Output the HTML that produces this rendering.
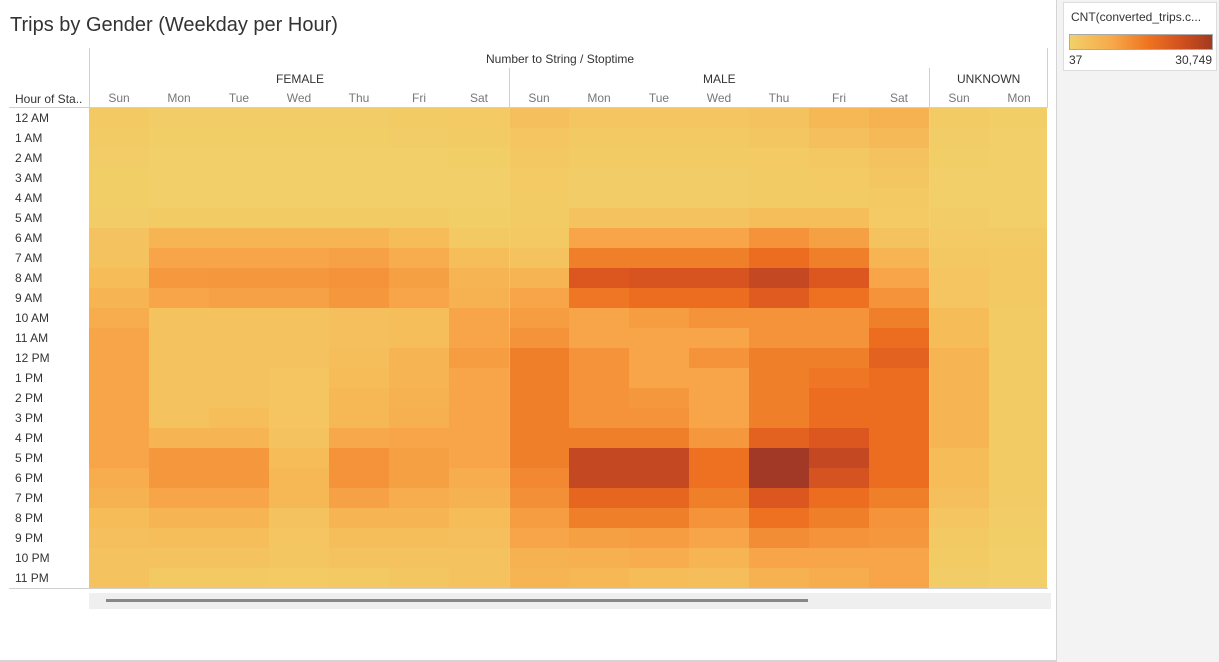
<!DOCTYPE html>
<html><head><meta charset="utf-8">
<style>
body{margin:0;width:1219px;height:662px;background:#f3f3f3;font-family:"Liberation Sans",sans-serif;position:relative;overflow:hidden}
#main{position:absolute;left:0;top:0;width:1056px;height:660px;background:#fff;border-right:1px solid #d4d4d4;border-bottom:2px solid #d4d4d4}
.t{position:absolute;white-space:nowrap}
#title{left:10px;top:14px;font-size:20px;color:#333}
.hdr{font-size:12px;color:#333}
.day{font-size:12px;color:#777;width:60px;text-align:center;top:91px}
.row{font-size:12px;color:#333;left:15px}
.cell{position:absolute;width:60px;height:20px}
.line{position:absolute;background:#d0d0d0}
</style></head><body>
<div id="main">
<div class="t" id="title">Trips by Gender (Weekday per Hour)</div>
<div class="t hdr" style="left:486px;top:52px">Number to String / Stoptime</div>
<div class="t hdr" style="left:276px;top:72px">FEMALE</div>
<div class="t hdr" style="left:703px;top:72px">MALE</div>
<div class="t hdr" style="left:957px;top:72px">UNKNOWN</div>
<div class="t hdr" style="left:15px;top:92px">Hour of Sta..</div>
<div class="line" style="left:89px;top:48px;width:1px;height:60px"></div>
<div class="line" style="left:509px;top:68px;width:1px;height:40px"></div>
<div class="line" style="left:929px;top:68px;width:1px;height:40px"></div>
<div class="line" style="left:1047px;top:48px;width:1px;height:60px"></div>
<div id="grid"></div>
<div class="line" style="left:9px;top:107px;width:1039px;height:1px"></div>
<div class="line" style="left:9px;top:588px;width:1039px;height:1px"></div>
<div class="line" style="left:509px;top:108px;width:1px;height:480px;background:#e8d0a0;opacity:.6"></div>
<div class="line" style="left:929px;top:108px;width:1px;height:480px;background:#e8d0a0;opacity:.6"></div>
<div style="position:absolute;left:89px;top:593px;width:962px;height:16px;background:#efefef"></div>
<div style="position:absolute;left:106px;top:599px;width:702px;height:3px;background:#888"></div>
</div>
<div style="position:absolute;left:1063px;top:2px;width:152px;height:67px;background:#fff;border:1px solid #ddd">
<div class="t" style="left:7px;top:7px;font-size:12px;color:#333">CNT(converted_trips.c...</div>
<div style="position:absolute;left:5px;top:31px;width:142px;height:14px;border:1px solid #aaa;background:linear-gradient(to right,#f2d06a,#f6a84a 30%,#ee7420 55%,#d2501f 78%,#a3391f)"></div>
<div class="t" style="left:5px;top:50px;font-size:12px;color:#333">37</div>
<div class="t" style="right:4px;top:50px;font-size:12px;color:#333">30,749</div>
</div>
<script>
var days=["Sun","Mon","Tue","Wed","Thu","Fri","Sat","Sun","Mon","Tue","Wed","Thu","Fri","Sat","Sun","Mon"];
var hours=["12 AM","1 AM","2 AM","3 AM","4 AM","5 AM","6 AM","7 AM","8 AM","9 AM","10 AM","11 AM","12 PM","1 PM","2 PM","3 PM","4 PM","5 PM","6 PM","7 PM","8 PM","9 PM","10 PM","11 PM"];
var cols=[
[.5,.3,.2,.1,.1,.2,1,1,1.5,2,2.5,3,3,3,3,3,3,3,2.5,2.2,1.5,1.2,1,1],
[.2,.1,0,0,0,.3,2,3,3.7,3,1,1,1,1,1,1,2,3.8,3.8,3,2,1.3,1,.5],
[.2,.1,0,0,0,.3,2,3,3.8,3.2,1,1,1,1,1,1.3,2,3.8,3.8,3,2,1.3,1,.5],
[.2,.1,0,0,0,.3,2,3,3.8,3.2,1,1,1,.8,.8,.8,1,1.5,1.8,1.8,1,.8,.7,.4],
[.2,.1,0,0,0,.3,2,3.2,4,3.8,1.2,1.2,1.3,1.5,1.8,1.8,2.8,4,4,3.2,2,1.3,1,.5],
[.3,.2,0,0,0,.3,1.5,2.5,3.3,3,1.3,1.3,2,2,2.2,2.3,3,3.3,3.3,2.5,2,1.3,1,.7],
[.4,.3,.1,0,0,.1,.5,1.3,2,2.2,3,3,3.5,3,3,3,3,3,2.5,2.2,1.5,1.2,1,1],
[1.2,.8,.6,.4,.3,.3,.5,1,2,3,3.5,4,5,5,5,5,5,5,4.5,4.2,3.5,3,2.2,2],
[.8,.5,.3,.2,.2,1,3,5,7,5.5,3,3,4,4,4,4,5,8,8,6.3,5,3.3,2.3,1.8],
[.8,.5,.3,.2,.2,1,3,5,7.2,6,3.5,3,3,3,3.8,4,5,8,8,6.3,5,3.5,2.5,1.5],
[.8,.5,.3,.2,.2,1,3,5,7.2,6,4,3,4,3,3,3,3.8,5.8,5.8,5,4,3,2,1.3],
[1,.7,.4,.3,.3,1.3,4,6,8,6.8,4,4,5,5,5,5,6.5,9,9,7,5.8,4.3,3,2.2],
[1.8,1.2,.6,.4,.3,1.3,3.3,5,7,5.8,4,4,5,5.5,6,6,7,8,7.3,6,5,4,3,2.5],
[2.2,1.6,1,.7,.5,.4,1,2,3,4,5,6,6.5,6,6,6,6,6,6,5,4,3.8,3,3],
[.3,.2,.1,0,0,.2,.4,.6,.8,.8,1.5,1.5,2,2,2,2,2,1.5,1.5,1.2,.8,.5,.3,.2],
[.1,0,0,0,0,0,.3,.5,.5,.5,.3,.3,.3,.3,.3,.3,.3,.3,.3,.3,.2,.1,0,0]];
var pal=[[242,207,104],[244,194,94],[246,181,82],[247,165,72],[244,147,58],[240,127,42],[236,109,31],[220,87,32],[196,72,33],[161,57,38]];
function col(v){var i=Math.min(8,Math.floor(v)),f=v-i,a=pal[i],b=pal[i+1];return "rgb("+[0,1,2].map(function(k){return Math.round(a[k]+(b[k]-a[k])*f)}).join(",")+")";}
var h="";
for(var c=0;c<16;c++){var w=c==15?58:60;
h+='<div class="t day" style="left:'+(89+c*60)+'px">'+days[c]+'</div>';
for(var r=0;r<24;r++)h+='<div class="cell" style="left:'+(89+c*60)+'px;top:'+(108+r*20)+'px;width:'+w+'px;background:'+col(cols[c][r])+'"></div>';}
for(var r=0;r<24;r++)h+='<div class="t row" style="top:'+(111+r*20)+'px">'+hours[r]+'</div>';
document.getElementById("grid").innerHTML=h;
</script>
</body></html>
